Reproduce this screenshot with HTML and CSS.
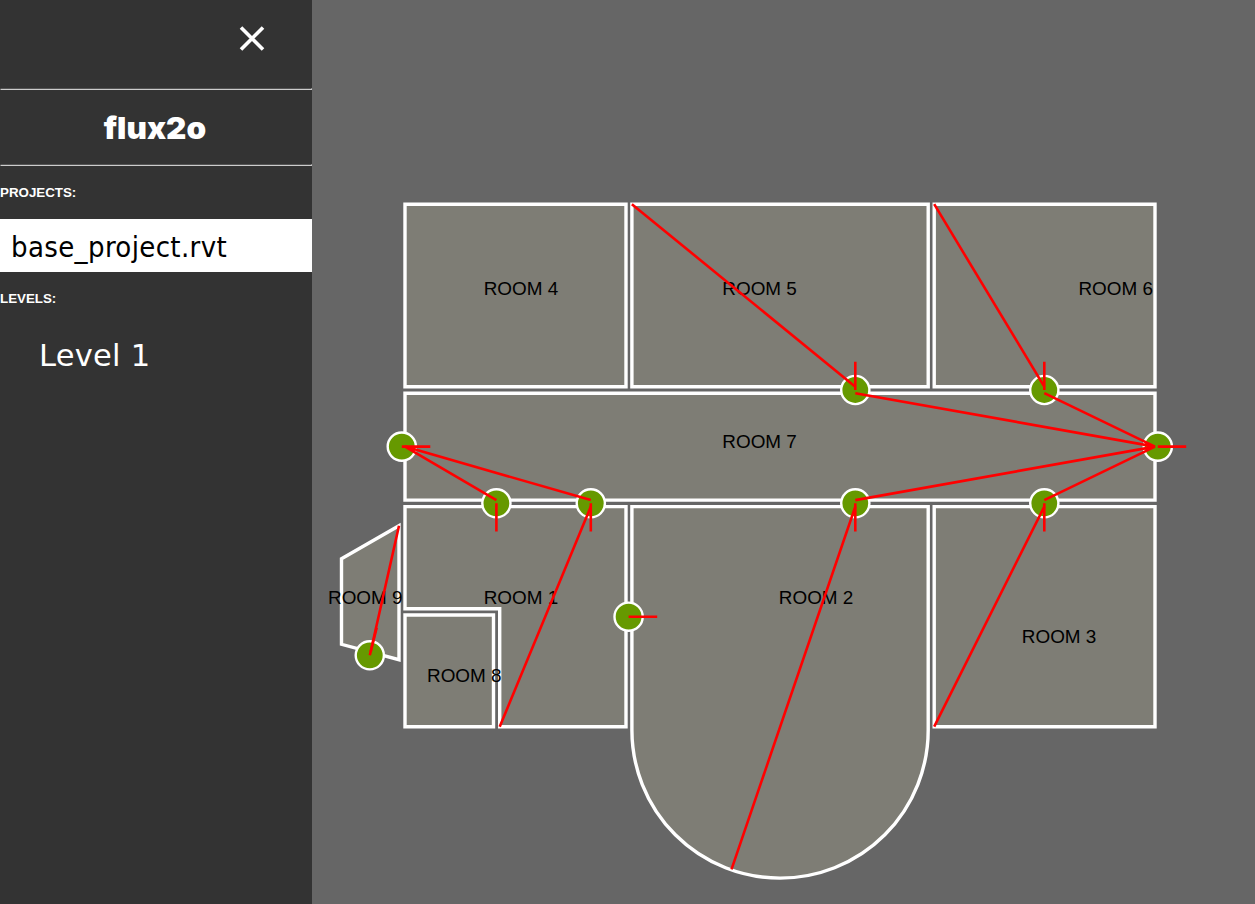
FILE: index.html
```html
<!DOCTYPE html>
<html lang="en">
<head>
<meta charset="utf-8">
<title>flux2o</title>
<link rel="stylesheet" href="styles.css">
</head>
<body>
<div class="app">
  <aside class="sidebar">
    <div class="sidebar-top">
      <button class="close" aria-label="Close">
        <svg width="26" height="26" viewBox="0 0 26 26"><path d="M2 2.5L24 24.5M24 2.5L2 24.5"/></svg>
      </button>
    </div>
    <hr class="rule">
    <h1 class="brand">flux2o</h1>
    <hr class="rule">
    <h2 class="label label-projects">PROJECTS:</h2>
    <a class="project"><span>base_project.rvt</span></a>
    <h2 class="label label-levels">LEVELS:</h2>
    <a class="level"><span>Level 1</span></a>
  </aside>
  <main class="plan">
    <svg width="943" height="904" viewBox="312 0 943 904">
      <g class="rooms">
        <path d="M405 204.2H626V386.7H405Z"/>
        <path d="M631.9 204.2H928.2V386.7H631.9Z"/>
        <path d="M934.2 204.2H1155V386.7H934.2Z"/>
        <path d="M405 393.2H1155V500.1H405Z"/>
        <path d="M405 506.6H626V726.7H499.7V608.7H405Z"/>
        <path d="M405 615H493.5V726.7H405Z"/>
        <path d="M631.9 506.6H928.2V730A148.15 148.15 0 0 1 631.9 730Z"/>
        <path d="M934.2 506.6H1155V726.7H934.2Z"/>
        <path d="M341.5 558.8L399 525.7V659.7L341.5 644.3Z"/>
      </g>
      <g class="names">
        <text x="520.9" y="294.8">ROOM 4</text>
        <text x="759.6" y="294.8">ROOM 5</text>
        <text x="1115.7" y="294.8">ROOM 6</text>
        <text x="759.6" y="447.8">ROOM 7</text>
        <text x="365.3" y="603.8">ROOM 9</text>
        <text x="520.9" y="603.8">ROOM 1</text>
        <text x="816.1" y="603.8">ROOM 2</text>
        <text x="1059.1" y="642.8">ROOM 3</text>
        <text x="464.3" y="681.8">ROOM 8</text>
      </g>
      <g class="doors">
        <circle cx="855.3" cy="390" r="14.1"/>
        <circle cx="1044.3" cy="390" r="14.1"/>
        <circle cx="401.8" cy="446.6" r="14.1"/>
        <circle cx="1157.8" cy="446.6" r="14.1"/>
        <circle cx="496.4" cy="503.3" r="14.1"/>
        <circle cx="590.8" cy="503.3" r="14.1"/>
        <circle cx="855.3" cy="503.3" r="14.1"/>
        <circle cx="1044.3" cy="503.3" r="14.1"/>
        <circle cx="628.6" cy="616.7" r="14.1"/>
        <circle cx="369.8" cy="655.3" r="14.1"/>
      </g>
      <g class="routes">
        <path d="M855.3 390V361.7M1044.3 390V361.7M401.8 446.6H430.3M1157.8 446.6H1186.2M496.4 503.3V531.5M590.8 503.3V531.5M855.3 503.3V531.5M1044.3 503.3V531.5M628.6 616.7H657.2M369.8 655.3L376.7 627.8"/>
        <path d="M631.9 204.2L855.3 386.7M934.2 204.2L1044.3 386.7M855.3 393.2L1155 446.6L1044.3 393.2M855.3 500.1L1155 446.6L1044.3 500.1"/>
        <path d="M496.4 500.1L405 446.6L590.8 500.1M590.8 506.6L499.7 726.7M855.3 506.6L731.5 869.3M1044.3 506.6L934.2 726.7M399 525.7L370.6 652"/>
      </g>
    </svg>
  </main>
</div>
</body>
</html>
```

FILE: styles.css
```css
body {
  margin: 0;
  background: #666;
  font-family: "Liberation Sans", Arial, sans-serif;
}

.app {
  display: flex;
  height: 904px;
  overflow: hidden;
}

.sidebar {
  width: 312px;
  flex: none;
  background: #333;
  color: #fff;
}

.sidebar-top {
  display: flex;
  justify-content: flex-end;
  height: 88px;
  padding: 25px 47px 0 0;
  box-sizing: border-box;
}

.close {
  width: 26px;
  height: 26px;
  padding: 0;
  border: 0;
  background: none;
}

.close svg {
  display: block;
  fill: none;
  stroke: #fff;
  stroke-width: 3.6;
}

.rule {
  height: 0;
  margin: 0;
  border: 1px solid;
  border-color: #555 #ccc #ccc #333;
}

.brand {
  height: 74px;
  margin: 0;
  font-family: Inter, sans-serif;
  font-size: 30px;
  font-weight: 900;
  line-height: 76px;
  text-align: center;
  transform: translateX(-1px) scaleX(1.05);
}

.label {
  margin: 0;
  font-size: 13.33px;
  line-height: 16px;
}

.label-projects,
.label-levels {
  padding: 19px 0 18px;
}

.project {
  display: block;
  height: 53px;
  padding-left: 11px;
  background: #fff;
  color: #000;
  font-family: "DejaVu Sans Condensed", "DejaVu Sans", sans-serif;
  font-stretch: condensed;
  font-size: 29px;
  letter-spacing: 0.35px;
  line-height: 57px;
}

.level {
  display: block;
  padding-left: 39px;
  font-family: "DejaVu Sans", sans-serif;
  font-size: 30.5px;
  letter-spacing: 0.25px;
  line-height: 62px;
}

.plan {
  flex: 1;
}

.plan svg {
  display: block;
}

.rooms {
  fill: #7e7d75;
  stroke: #fff;
  stroke-width: 3.4;
}

.names {
  fill: #000;
  font-size: 18.9px;
  text-anchor: middle;
}

.doors {
  fill: #690;
  stroke: #fff;
  stroke-width: 2.4;
}

.routes {
  fill: none;
  stroke: #f00;
  stroke-width: 2.6;
}
```
